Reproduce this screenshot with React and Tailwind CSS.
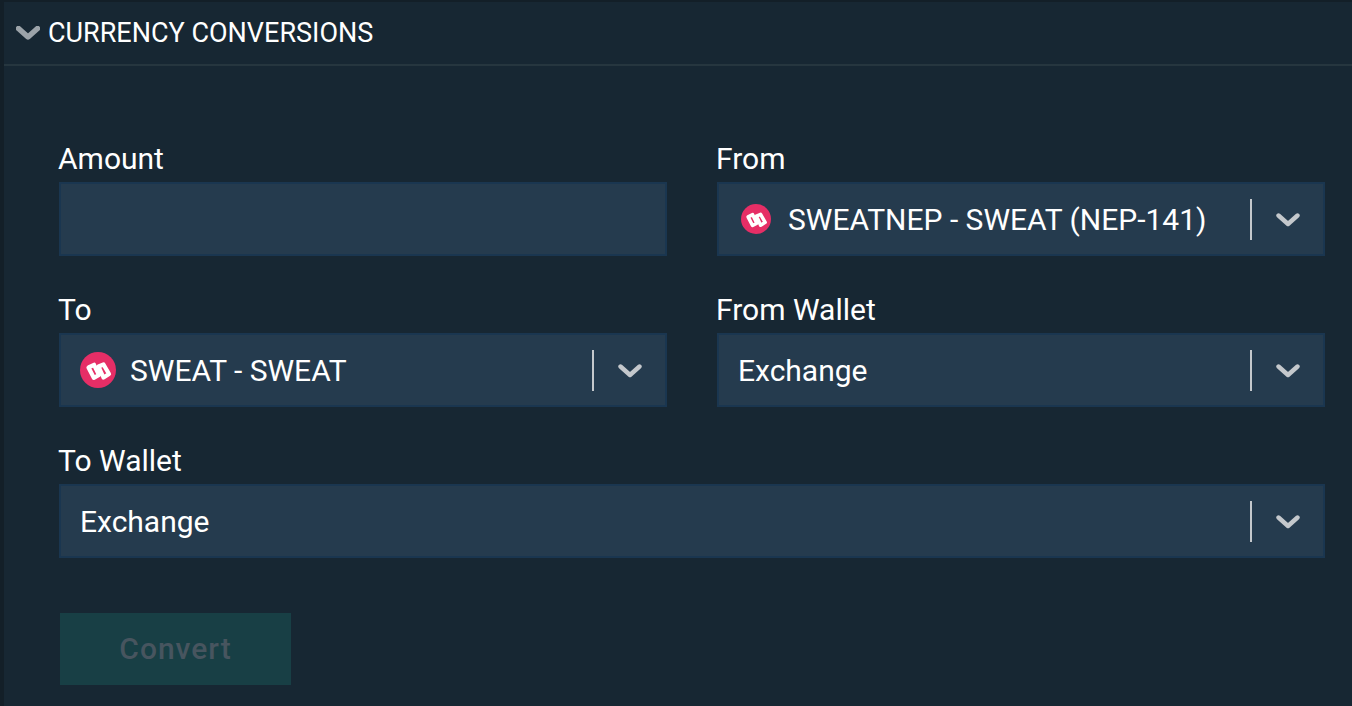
import React from 'react';

function SweatLogo({ size }) {
  return (
    <svg width={size} height={size} viewBox="0 0 36 36" className="shrink-0">
      <circle cx="18" cy="18" r="18" fill="#e62e66" />
      <g fill="none" stroke="#ffffff" strokeWidth="4.2" strokeLinejoin="round">
        <path d="M8.5 15.5 L14 12.8 L19 23 L13.8 25.8 Z" />
        <path d="M18.5 14.5 L23.5 12.5 L29 22 L23.5 25.5 Z" />
      </g>
    </svg>
  );
}

function Chevron({ className, bold }) {
  return (
    <svg width="24" height="14" viewBox="0 0 24 14" className={className}>
      <path d="M2.5 2.5 L12 11 L21.5 2.5" fill="none" stroke="currentColor" strokeWidth={bold ? 5.5 : 4.4} strokeLinejoin="round" strokeLinecap="round" />
    </svg>
  );
}

function Field({ label, className, children }) {
  return (
    <div className={className}>
      <div className="-ml-[1px] h-[38px] text-[30px] leading-[30px] text-white">{label}</div>
      {children}
    </div>
  );
}

function Select({ value, logo }) {
  return (
    <div className="flex h-[74px] items-center border-2 border-[#1a3650] bg-[#253b4e] pl-[19px]">
      {logo === 30 && <div className="ml-[3px] mr-[17px]"><SweatLogo size={30} /></div>}
      {logo === 36 && <div className="mr-[14px]"><SweatLogo size={36} /></div>}
      <span className="flex-1 truncate text-[30px] text-white">{value}</span>
      <div className="h-[41px] w-[2px] bg-[#c4c8cc]" />
      <div className="flex w-[71px] justify-center pt-[1px]">
        <Chevron className="text-[#c4c8cc]" />
      </div>
    </div>
  );
}

export default function App() {
  return (
    <div className="h-[706px] w-[1352px] overflow-hidden bg-[#131f28] pl-[4px] pt-[2px] font-['Roboto',sans-serif]">
      <div className="h-full w-full bg-[#172733]">
        <div className="flex h-[64px] items-center border-b-2 border-[#26363f] pl-[12px]">
          <Chevron bold className="text-[#9ca3a9]" />
          <span className="ml-[8px] text-[27px] text-white">CURRENCY CONVERSIONS</span>
        </div>
        <div className="grid grid-cols-[608px_608px] gap-x-[50px] gap-y-[39px] pl-[55px] pt-[78px]">
          <Field label="Amount">
            <div className="h-[74px] border-2 border-[#1a3650] bg-[#253b4e]" />
          </Field>
          <Field label="From">
            <Select value="SWEATNEP - SWEAT (NEP-141)" logo={30} />
          </Field>
          <Field label="To">
            <Select value="SWEAT - SWEAT" logo={36} />
          </Field>
          <Field label="From Wallet">
            <Select value="Exchange" />
          </Field>
          <Field label="To Wallet" className="col-span-2">
            <Select value="Exchange" />
          </Field>
        </div>
        <div className="ml-[56px] mt-[55px] flex h-[72px] w-[231px] items-center justify-center bg-[#183f45] pb-[2px] text-[30px] font-medium tracking-[1px] text-[#47555f]">
          Convert
        </div>
      </div>
    </div>
  );
}
